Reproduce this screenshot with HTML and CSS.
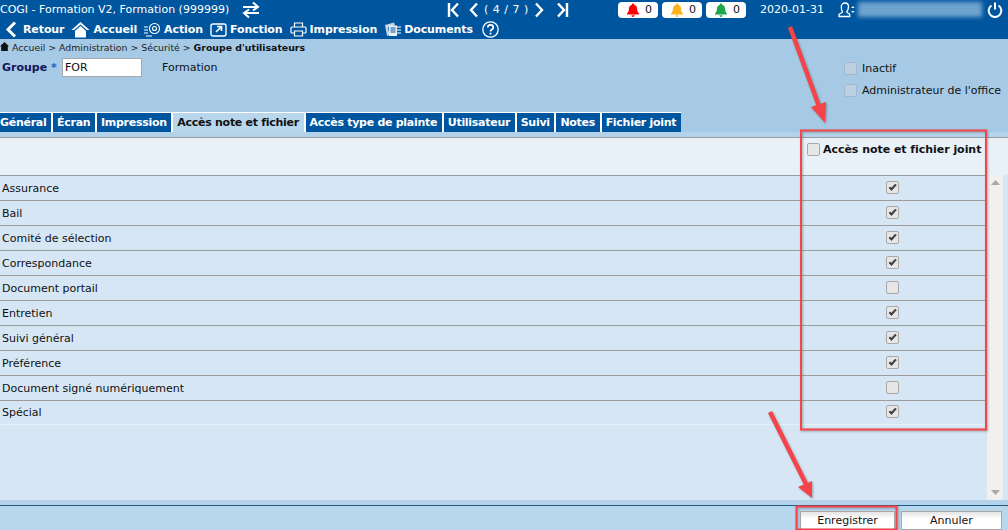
FILE: index.html
```html
<!DOCTYPE html>
<html lang="fr">
<head>
<meta charset="utf-8">
<title>COGI - Groupe d'utilisateurs</title>
<link rel="stylesheet" href="styles.css">
</head>
<body>

<svg class="defs" width="0" height="0">
  <symbol id="bell" viewBox="0 0 14 14">
    <path d="M7 0.500a1.200 1.200 0 0 1 1.200 1.300c2 .6 2.800 2.200 2.900 4.200.1 2 .7 3.400 1.900 4.600v1H1v-1c1.200-1.200 1.800-2.600 1.900-4.600.1-2 .9-3.600 2.900-4.200A1.200 1.200 0 0 1 7 .5z"/>
    <path d="M5.400 12.300h3.200a1.600 1.600 0 0 1-3.200 0z"/>
  </symbol>
  <symbol id="tick" viewBox="0 0 13 13">
    <path d="M2.500 7l2.800 3L11 3.500 9.500 2.800 5.300 7.400 3.800 5.800z" fill="#3c3c3c" stroke="#3c3c3c" stroke-width="1"/>
  </symbol>
</svg>

<header class="topbar">
  <div class="topbar-row">
    <span class="app-title">COGI - Formation V2, Formation (999999)</span>
    <svg class="swap" width="22" height="18" viewBox="0 0 22 18" fill="none" stroke="#fff" stroke-width="2">
      <path d="M3 6h15M13 1.500l5 4.500-5 3.500"/><path d="M19 12H4M9 8.500l-5 3.500 5 4.500"/>
    </svg>
    <div class="pager">
      <svg width="14" height="16" viewBox="0 0 14 16" fill="none" stroke="#fff" stroke-width="2.400"><path d="M2 1v14M11 1.500L5 8l6 6.500"/></svg>
      <svg class="pager-prev" width="11" height="16" viewBox="0 0 11 16" fill="none" stroke="#fff" stroke-width="2.400"><path d="M9 1.500L3 8l6 6.500"/></svg>
      <span class="pager-text">( 4 / 7 )</span>
      <svg width="11" height="16" viewBox="0 0 11 16" fill="none" stroke="#fff" stroke-width="2.400"><path d="M2 1.500L8 8l-6 6.500"/></svg>
      <svg class="pager-last" width="14" height="16" viewBox="0 0 14 16" fill="none" stroke="#fff" stroke-width="2.400"><path d="M12 1v14M3 1.500L9 8l-6 6.500"/></svg>
    </div>
    <div class="alerts">
      <span class="alert"><svg class="bell-red" width="14" height="14"><use href="#bell"/></svg>0</span>
      <span class="alert"><svg class="bell-orange" width="14" height="14"><use href="#bell"/></svg>0</span>
      <span class="alert"><svg class="bell-green" width="14" height="14"><use href="#bell"/></svg>0</span>
    </div>
    <span class="today">2020-01-31</span>
    <svg class="user" width="17" height="16" viewBox="0 0 17 16" fill="none" stroke="#fff" stroke-width="1.300">
      <path d="M7 1c2.300 0 3.500 1.700 3.500 3.800S9.300 9 8.700 9.800c0 1 2 1.500 3 2.500v2.200H1v-2c1-1.200 3.300-1.500 3.500-2.700C3.800 9 3.300 7 3.300 4.800S4.700 1 7 1z"/>
      <path d="M13 6l2-2 1.500 2zM13 9l2 2 1.500-2z" fill="#fff" stroke="none"/>
    </svg>
    <span class="user-name"></span>
    <svg class="power" width="16" height="16" viewBox="0 0 16 16" fill="none" stroke="#fff" stroke-width="2">
      <path d="M4.500 3.500a6.300 6.300 0 1 0 7 0M8 .5v7"/>
    </svg>
  </div>
  <nav class="menu">
    <a class="menu-item menu-back">
      <svg width="14" height="17" viewBox="0 0 14 17" fill="none" stroke="#fff" stroke-width="3"><path d="M11 1.500L4 8.500l7 7"/></svg>
      Retour
    </a>
    <a class="menu-item">
      <svg width="19" height="17" viewBox="0 0 19 17"><path d="M9.500 1L0.500 9h2.700L9.500 3.500 15.800 9h2.700z" fill="#fff"/><path d="M4 10l5.500-5 5.500 5v6.500H4z" fill="#fff"/></svg>
      Accueil
    </a>
    <a class="menu-item">
      <svg width="17" height="15" viewBox="0 0 17 15" fill="none" stroke="#fff" stroke-width="1.100"><path d="M0 5h4M0 8h4M0 11h4M2 14h6"/><circle cx="10.500" cy="6.500" r="5"/><circle cx="10.500" cy="6.500" r="2"/></svg>
      Action
    </a>
    <a class="menu-item">
      <svg width="17" height="15" viewBox="0 0 17 15" fill="none" stroke="#fff" stroke-width="1.400"><rect x="1" y="2" width="15" height="12" rx="2"/><path d="M6 10l5-5M7 4.500h4.500V9" stroke-width="1.700"/></svg>
      Fonction
    </a>
    <a class="menu-item">
      <svg width="17" height="15" viewBox="0 0 17 15" fill="none" stroke="#fff" stroke-width="1.200"><path d="M4.500 5V1h8v4"/><rect x="1" y="5" width="15" height="6" rx="1"/><path d="M4.500 9h8v5h-8z" fill="#00569e"/></svg>
      Impression
    </a>
    <a class="menu-item">
      <svg width="17" height="15" viewBox="0 0 17 15"><path d="M1 3l9-2.500 1 3-7 2 1.500 7.500L3 14z" fill="#c3d4e4"/><path d="M5 3.500h8v10.500H5z" fill="#e8eef4"/><path d="M6.500 6h5M6.500 8h5M6.500 10h5" stroke="#00569e"/><path d="M13 5h4M13 8h4M13 11h4" stroke="#fff"/></svg>
      Documents
    </a>
    <svg class="help" width="17" height="17" viewBox="0 0 17 17" fill="none" stroke="#fff" stroke-width="1.300">
      <circle cx="8.500" cy="8.500" r="7.700"/>
      <path d="M5.800 6.500c0-3.400 5.500-3.400 5.500 0 0 2-2.800 2-2.800 4" stroke-width="1.700"/>
      <path d="M8.500 11.700v1.800" stroke-width="1.800"/>
    </svg>
  </nav>
</header>

<div class="crumbs">
  <svg width="9" height="9" viewBox="0 0 9 9"><path d="M4.500 0L0 4.200h1.200V9h6.600V4.200H9z" fill="#111"/></svg>
  Accueil &gt; Administration &gt; Sécurité &gt; <b>Groupe d'utilisateurs</b>
</div>

<section class="form">
  <div class="group-field">
    <label class="group-label">Groupe <span class="req">*</span></label>
    <span class="group-code">FOR</span>
    <span class="group-name">Formation</span>
  </div>
  <div class="flags">
    <label class="flag"><span class="box box-flag"></span>Inactif</label>
    <label class="flag"><span class="box box-flag"></span>Administrateur de l'office</label>
  </div>
</section>

<nav class="tabs">
  <a class="tab tab-first">Général</a>
  <a class="tab">Écran</a>
  <a class="tab">Impression</a>
  <a class="tab tab-active">Accès note et fichier</a>
  <a class="tab">Accès type de plainte</a>
  <a class="tab">Utilisateur</a>
  <a class="tab">Suivi</a>
  <a class="tab">Notes</a>
  <a class="tab">Fichier joint</a>
</nav>

<main class="pane">
  <div class="grid-head">
    <div class="head-check"><span class="box"></span>Accès note et fichier joint</div>
  </div>
  <div class="grid-body">
    <div class="rows">
      <div class="row"><span>Assurance</span><span class="box"><svg width="11" height="11"><use href="#tick"/></svg></span></div>
      <div class="row"><span>Bail</span><span class="box"><svg width="11" height="11"><use href="#tick"/></svg></span></div>
      <div class="row"><span>Comité de sélection</span><span class="box"><svg width="11" height="11"><use href="#tick"/></svg></span></div>
      <div class="row"><span>Correspondance</span><span class="box"><svg width="11" height="11"><use href="#tick"/></svg></span></div>
      <div class="row"><span>Document portail</span><span class="box"></span></div>
      <div class="row"><span>Entretien</span><span class="box"><svg width="11" height="11"><use href="#tick"/></svg></span></div>
      <div class="row"><span>Suivi général</span><span class="box"><svg width="11" height="11"><use href="#tick"/></svg></span></div>
      <div class="row"><span>Préférence</span><span class="box"><svg width="11" height="11"><use href="#tick"/></svg></span></div>
      <div class="row"><span>Document signé numériquement</span><span class="box"></span></div>
      <div class="row row-last"><span>Spécial</span><span class="box"><svg width="11" height="11"><use href="#tick"/></svg></span></div>
    </div>
    <div class="scrollbar">
      <svg width="9" height="5" viewBox="0 0 9 5"><path d="M4.500 0L9 5H0z" fill="#a8a8a8"/></svg>
      <svg width="9" height="5" viewBox="0 0 9 5"><path d="M4.500 5L9 0H0z" fill="#a8a8a8"/></svg>
    </div>
  </div>
</main>

<footer class="actions">
  <button class="btn btn-save">Enregistrer</button>
  <button class="btn btn-cancel">Annuler</button>
</footer>

<!-- red marks drawn over the screenshot -->
<svg class="marks" width="1008" height="530" viewBox="0 0 1008 530" fill="none">
  <rect x="801" y="130.500" width="185" height="299" stroke="#f4444a" stroke-width="2"/>
  <rect x="796.500" y="506.500" width="100" height="23" stroke="#f4444a" stroke-width="2"/>
  <path d="M790 27l30 82" stroke="#f4444a" stroke-width="4.500"/>
  <path d="M825 123l-14-16 15-5z" fill="#f4444a"/>
  <path d="M770 412l36 72" stroke="#f4444a" stroke-width="4.500"/>
  <path d="M812 498l-14-11 14-6z" fill="#f4444a"/>
</svg>

</body>
</html>
```

FILE: styles.css
```css
body {
   margin: 0;
   width: 1008px;
   height: 530px;
   overflow: hidden;
   position: relative;
   display: flex;
   flex-direction: column;
   background: #a6cae5;
   color: #111;
   font-family: "DejaVu Sans", sans-serif;
   font-size: 11px; }

.defs {
   position: absolute; }

.topbar {
   height: 39px;
   flex: none;
   background: #00569e;
   color: #fff; }

.topbar-row {
   height: 19px;
   display: flex;
   align-items: center; }

.app-title {
   width: 240px;
   font-size: 11px;
   white-space: nowrap; }

.swap {
   margin-right: 185px; }

.pager {
   width: 171px;
   display: flex;
   align-items: center;
   gap: 5px; }

.pager-prev {
   margin-left: 2px; }

.pager-last {
   margin-left: 5px; }

.pager-text {
   letter-spacing: 0.5px; }

.alerts {
   display: flex;
   gap: 4px;
   margin-right: 14px; }

.alert {
   width: 40px;
   height: 16px;
   box-sizing: border-box;
   padding: 0 6px 0 8px;
   display: flex;
   align-items: center;
   justify-content: space-between;
   background: #fff;
   border-radius: 4px;
   color: #111; }

.bell-red { fill: #f00; }
.bell-orange { fill: #fdb21e; }
.bell-green { fill: #1fa54a; }

.today {
   width: 78px; }

.user-name {
   width: 124px;
   height: 15px;
   margin: 0 5px 0 3px;
   background: #6fa3cf;
   filter: blur(2px); }

.menu {
   height: 20px;
   display: flex;
   align-items: center;
   gap: 7px; }

.menu-item {
   display: flex;
   align-items: center;
   gap: 3px;
   font-weight: bold;
   letter-spacing: -0.1px; }

.menu-back {
   gap: 5px;
   margin-left: 4px; }

.help {
   margin-left: 2px; }

.crumbs {
   height: 16px;
   flex: none;
   padding-top: 3px;
   box-sizing: border-box;
   font-size: 9.35px;
   color: #222;
   white-space: nowrap; }

.crumbs b {
   color: #111; }

.form {
   height: 57px;
   flex: none;
   display: flex;
   justify-content: space-between; }

.group-field {
   display: flex;
   align-items: flex-start; }

.group-label {
   width: 60px;
   margin-left: 2px;
   line-height: 26px;
   font-weight: bold;
   color: #14145a; }

.req {
   color: #2a5cc0; }

.group-code {
   width: 76px;
   height: 17px;
   margin-top: 3px;
   padding-left: 2px;
   line-height: 18px;
   border: 1px solid #a9a9a9;
   background: #fff;
   margin-right: 20px; }

.group-name {
   line-height: 26px; }

.flags {
   width: 164px;
   display: flex;
   flex-direction: column;
   gap: 9px;
   padding-top: 7px; }

.flag {
   display: flex;
   align-items: center;
   gap: 5px;
   height: 13px;
   white-space: nowrap; }

.box {
   width: 13px;
   height: 13px;
   box-sizing: border-box;
   display: flex;
   align-items: center;
   justify-content: center;
   flex: none;
   background: #e6e6e6;
   border: 1px solid #a8a8a8;
   border-radius: 2px; }

.box-flag {
   background: #bcd0e2;
   border-color: #a3b8cb; }

.tabs {
   height: 20px;
   flex: none;
   display: flex;
   align-items: stretch; }

.tab {
   padding: 0 4.6px 0 4px;
   line-height: 19px;
   font-weight: bold;
   letter-spacing: -0.28px;
   color: #fff;
   background: #00569e;
   border-top: 1px solid #fff;
   border-left: 2px solid #fff; }

.tab-first {
   padding-left: 0;
   border-left: none; }

.tab-active {
   background: #b8d6ec;
   color: #111; }

.pane {
   height: 373px;
   box-sizing: border-box;
   flex: none;
   background: #d6e6f4;
   border-top: 5px solid #b4d3ea;
   border-bottom: 5px solid #b4d3ea; }

.grid-head {
   height: 38px;
   display: flex;
   justify-content: flex-end;
   box-sizing: border-box;
   background: #e8f0f8;
   border-top: 1px solid #9c9c9c; }

.head-check {
   width: 201px;
   display: flex;
   gap: 3px;
   padding-top: 4px;
   height: 14px;
   align-items: center;
   font-weight: bold;
   letter-spacing: -0.04px;
   white-space: nowrap; }

.grid-body {
   height: 325px;
   display: flex; }

.rows {
   width: 987px;
   flex: none; }

.row {
   height: 25px;
   box-sizing: border-box;
   display: flex;
   align-items: center;
   justify-content: space-between;
   padding: 0 88px 0 2px;
   border-top: 1px solid #9c9c9c; }

.row .box {
   margin-bottom: 2px; }

.row-last {
   border-bottom: 1px solid #e8f0f8; }

.scrollbar {
   width: 16px;
   display: flex;
   flex-direction: column;
   align-items: center;
   justify-content: space-between;
   padding: 5px 0;
   box-sizing: border-box;
   background: #f0f0f0; }

.actions {
   flex: 1;
   display: flex;
   justify-content: flex-end;
   align-items: flex-start;
   gap: 6px;
   padding: 5px 6px 0 0;
   background: #b8d6ec;
   border-top: 1px solid #1d5c80; }

.btn {
   height: 19px;
   padding: 0;
   font-family: inherit;
   font-size: 11px;
   color: #111;
   background: linear-gradient(#e4e4e4, #fff 40%);
   border: 1px solid #a8a8a8; }

.btn-save {
   width: 95px; }

.btn-cancel {
   width: 101px; }

.marks {
   position: absolute;
   left: 0;
   top: 0;
   filter: drop-shadow(1px 1px 1px rgba(60, 60, 60, 0.4)); }
```
